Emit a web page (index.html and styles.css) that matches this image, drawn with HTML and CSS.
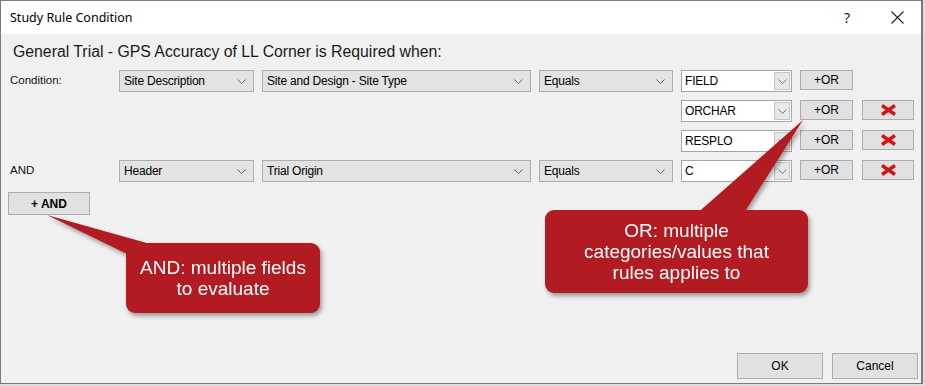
FILE: index.html
```html
<!DOCTYPE html>
<html lang="en">
<head>
    <meta charset="UTF-8">
    <meta name="viewport" content="width=device-width, initial-scale=1.0">
    <title>Study Rule Condition</title>
    <link rel="stylesheet" href="styles.css">
</head>
<body>
    <div class="window">
        <div class="titlebar">
            <span class="title">Study Rule Condition</span>
            <span class="help">?</span>
            <span class="close">
                <svg width="13" height="13" viewBox="0 0 13 13"><path d="M0.5 0.5 L12.5 12.5 M12.5 0.5 L0.5 12.5" stroke="#222" stroke-width="1.1" fill="none"/></svg>
            </span>
        </div>
        <div class="client">
            <h1 class="rule-title">General Trial - GPS Accuracy of LL Corner is Required when:</h1>
            <div class="conditions">
                <!-- row 1 -->
                <div class="row-label">Condition:</div>
                <div class="dropdown"><span>Site Description</span><svg class="chev" width="9" height="5" viewBox="0 0 9 5"><path d="M0.5 0.5 L4.5 4.5 L8.5 0.5" stroke="#666" fill="none"/></svg></div>
                <div class="dropdown"><span>Site and Design - Site Type</span><svg class="chev" width="9" height="5" viewBox="0 0 9 5"><path d="M0.5 0.5 L4.5 4.5 L8.5 0.5" stroke="#666" fill="none"/></svg></div>
                <div class="dropdown"><span>Equals</span><svg class="chev" width="9" height="5" viewBox="0 0 9 5"><path d="M0.5 0.5 L4.5 4.5 L8.5 0.5" stroke="#666" fill="none"/></svg></div>
                <div class="combo"><span class="combo-text">FIELD</span><span class="combo-arrow"><svg width="9" height="5" viewBox="0 0 9 5"><path d="M0.5 0.5 L4.5 4.5 L8.5 0.5" stroke="#777" fill="none"/></svg></span></div>
                <button class="btn btn-or">+OR</button>
                <div></div>

                <!-- row 2 -->
                <div class="combo col-value"><span class="combo-text">ORCHAR</span><span class="combo-arrow"><svg width="9" height="5" viewBox="0 0 9 5"><path d="M0.5 0.5 L4.5 4.5 L8.5 0.5" stroke="#777" fill="none"/></svg></span></div>
                <button class="btn btn-or">+OR</button>
                <button class="btn btn-del"><svg width="17" height="12" viewBox="0 0 17 12"><path d="M2 1.5 L15 10.5 M15 1.5 L2 10.5" stroke="#d21414" stroke-width="3.4" fill="none"/></svg></button>

                <!-- row 3 -->
                <div class="combo col-value"><span class="combo-text">RESPLO</span><span class="combo-arrow"><svg width="9" height="5" viewBox="0 0 9 5"><path d="M0.5 0.5 L4.5 4.5 L8.5 0.5" stroke="#777" fill="none"/></svg></span></div>
                <button class="btn btn-or">+OR</button>
                <button class="btn btn-del"><svg width="17" height="12" viewBox="0 0 17 12"><path d="M2 1.5 L15 10.5 M15 1.5 L2 10.5" stroke="#d21414" stroke-width="3.4" fill="none"/></svg></button>

                <!-- row 4 -->
                <div class="row-label">AND</div>
                <div class="dropdown"><span>Header</span><svg class="chev" width="9" height="5" viewBox="0 0 9 5"><path d="M0.5 0.5 L4.5 4.5 L8.5 0.5" stroke="#666" fill="none"/></svg></div>
                <div class="dropdown"><span>Trial Origin</span><svg class="chev" width="9" height="5" viewBox="0 0 9 5"><path d="M0.5 0.5 L4.5 4.5 L8.5 0.5" stroke="#666" fill="none"/></svg></div>
                <div class="dropdown"><span>Equals</span><svg class="chev" width="9" height="5" viewBox="0 0 9 5"><path d="M0.5 0.5 L4.5 4.5 L8.5 0.5" stroke="#666" fill="none"/></svg></div>
                <div class="combo"><span class="combo-text">C</span><span class="combo-arrow"><svg width="9" height="5" viewBox="0 0 9 5"><path d="M0.5 0.5 L4.5 4.5 L8.5 0.5" stroke="#777" fill="none"/></svg></span></div>
                <button class="btn btn-or">+OR</button>
                <button class="btn btn-del"><svg width="17" height="12" viewBox="0 0 17 12"><path d="M2 1.5 L15 10.5 M15 1.5 L2 10.5" stroke="#d21414" stroke-width="3.4" fill="none"/></svg></button>
            </div>
            <button class="btn btn-and">+ AND</button>
            <div class="footer">
                <button class="btn btn-footer">OK</button>
                <button class="btn btn-footer">Cancel</button>
            </div>
        </div>

        <!-- annotation callouts drawn over the dialog -->
        <div class="callouts">
            <svg class="tails" width="921" height="382" viewBox="0 0 921 382">
                <polygon points="46,214 160,246 124,252" fill="#b31b22"/>
                <polygon points="802,119 693,215 741,215" fill="#b31b22"/>
            </svg>
            <div class="callout callout-and">AND: multiple fields<br>to evaluate</div>
            <div class="callout callout-or">OR: multiple<br>categories/values that<br>rules applies to</div>
        </div>
    </div>
</body>
</html>
```

FILE: styles.css
```css
body {
    margin: 0;
    padding: 0;
    background-color: #dcdcdc;
    font-family: "Liberation Sans", Arial, sans-serif;
}
.window {
    position: relative;
    width: 923px;
    height: 384px;
    box-sizing: border-box;
    border: 1px solid #7a7a7a;
    border-right-width: 2px;
    display: flex;
    flex-direction: column;
    background-color: #f0f0f0;
}
.titlebar {
    height: 33px;
    flex-shrink: 0;
    display: flex;
    align-items: center;
    background-color: #ffffff;
    padding-left: 9px;
}
.title {
    font-family: "Noto Sans", sans-serif;
    font-size: 12.5px;
    color: #000;
}
.help {
    margin-left: auto;
    margin-right: 23px;
    font-family: "Noto Sans", sans-serif;
    font-size: 14px;
    color: #222;
}
.close {
    width: 48px;
    display: flex;
    justify-content: center;
}
.client {
    flex: 1;
    display: flex;
    flex-direction: column;
}
.rule-title {
    margin: 9px 0 0 12px;
    font-size: 15.8px;
    line-height: 18px;
    font-weight: normal;
    color: #1a1a1a;
}
.conditions {
    display: grid;
    grid-template-columns: 101px 135px 269px 134px 111px 54px 52px;
    grid-auto-rows: 22px;
    column-gap: 8px;
    row-gap: 8px;
    margin: 9px 0 0 9px;
    font-size: 12px;
    letter-spacing: -0.2px;
}
.row-label {
    font-size: 11.5px;
    padding-top: 4px;
    color: #111;
    letter-spacing: 0;
}
.dropdown {
    display: flex;
    align-items: center;
    justify-content: space-between;
    padding: 0 7px 0 4px;
    background-color: #e3e3e3;
    border: 1px solid #adadad;
    color: #000;
}
.combo {
    display: flex;
    background-color: #ffffff;
    border: 1px solid #a5a5a5;
    color: #000;
}
.col-value {
    grid-column: 5;
}
.combo-text {
    flex: 1;
    padding-left: 3px;
    line-height: 20px;
}
.combo-arrow {
    width: 14px;
    display: flex;
    align-items: center;
    justify-content: center;
    margin: 1px;
    background-color: #e8e8e8;
    border: 1px solid #c4c4c4;
}
.btn {
    font-family: "Liberation Sans", Arial, sans-serif;
    background-color: #e1e1e1;
    border: 1px solid #adadad;
    color: #000;
    padding: 0;
    margin: 0;
}
.btn-or {
    height: 20px;
    width: 53px;
    font-size: 12px;
    letter-spacing: 0;
    word-spacing: 0;
    align-self: start;
}
.btn-del {
    height: 20px;
    width: 52px;
    display: flex;
    align-items: center;
    justify-content: center;
    align-self: start;
}
.btn-and {
    align-self: flex-start;
    margin: 10px 0 0 7px;
    width: 82px;
    height: 23px;
    font-size: 12px;
    font-weight: bold;
}
.footer {
    margin-top: auto;
    margin-bottom: 4px;
    display: flex;
    justify-content: flex-end;
    gap: 9px;
    padding-right: 3px;
}
.btn-footer {
    width: 86px;
    height: 26px;
    font-size: 12px;
}
.callouts {
    position: absolute;
    inset: 0;
    pointer-events: none;
    filter: drop-shadow(2px 3px 2px rgba(0, 0, 0, 0.35));
}
.tails {
    position: absolute;
    left: 0;
    top: 0;
}
.callout {
    position: absolute;
    display: flex;
    align-items: center;
    justify-content: center;
    text-align: center;
    background-color: #b31b22;
    border-radius: 9px;
    color: #ffffff;
    font-size: 19px;
    line-height: 21px;
}
.callout-and {
    left: 125px;
    top: 242px;
    width: 194px;
    height: 70px;
}
.callout-or {
    left: 544px;
    top: 209px;
    width: 263px;
    height: 83px;
}
```
